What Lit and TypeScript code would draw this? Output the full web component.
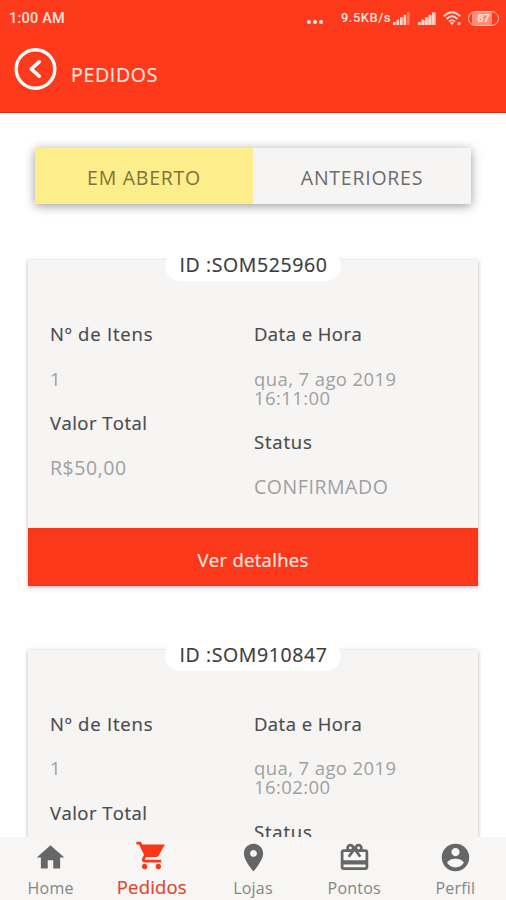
import { LitElement, html, css, svg } from "lit";
import { customElement, property } from "lit/decorators.js";
import { classMap } from "lit/directives/class-map.js";

interface Order {
  id: string;
  items: string;
  total: string;
  date: string;
  time: string;
  status: string;
}

const orders: Order[] = [
  { id: "SOM525960", items: "1", total: "R$50,00", date: "qua, 7 ago 2019", time: "16:11:00", status: "CONFIRMADO" },
  { id: "SOM910847", items: "1", total: "R$50,00", date: "qua, 7 ago 2019", time: "16:02:00", status: "CONFIRMADO" },
];

const navItems = [
  { label: "Home", path: "M10 20v-6h4v6h5v-8h3L12 3 2 12h3v8z" },
  {
    label: "Pedidos",
    active: true,
    path: "M7 18c-1.1 0-1.99.9-1.99 2S5.9 22 7 22s2-.9 2-2-.9-2-2-2zM1 2v2h2l3.6 7.59-1.35 2.45c-.16.28-.25.61-.25.96 0 1.1.9 2 2 2h12v-2H7.42c-.14 0-.25-.11-.25-.25l.03-.12.9-1.63h7.45c.75 0 1.41-.41 1.75-1.03L21.7 4H5.21l-.94-2H1zm16 16c-1.1 0-1.99.9-1.99 2s.89 2 1.99 2 2-.9 2-2-.9-2-2-2z",
  },
  {
    label: "Lojas",
    path: "M12 2C8.13 2 5 5.13 5 9c0 5.25 7 13 7 13s7-7.75 7-13c0-3.87-3.13-7-7-7zm0 9.5c-1.38 0-2.5-1.12-2.5-2.5s1.12-2.5 2.5-2.5 2.5 1.12 2.5 2.5-1.12 2.5-2.5 2.5z",
  },
  {
    label: "Pontos",
    path: "M20 6h-2.18c.11-.31.18-.65.18-1 0-1.66-1.34-3-3-3-1.05 0-1.96.54-2.5 1.35l-.5.67-.5-.68C10.96 2.54 10.05 2 9 2 7.34 2 6 3.34 6 5c0 .35.07.69.18 1H4c-1.11 0-1.99.89-1.99 2L2 19c0 1.11.89 2 2 2h16c1.11 0 2-.89 2-2V8c0-1.11-.89-2-2-2zm-5-2c.55 0 1 .45 1 1s-.45 1-1 1-1-.45-1-1 .45-1 1-1zM9 4c.55 0 1 .45 1 1s-.45 1-1 1-1-.45-1-1 .45-1 1-1zm11 15H4v-2h16v2zm0-5H4V8h5.08L7 10.83 8.62 12 11 8.76l1-1.36 1 1.36L15.38 12 17 10.83 14.92 8H20v6z",
  },
  {
    label: "Perfil",
    path: "M12 2C6.48 2 2 6.48 2 12s4.48 10 10 10 10-4.48 10-10S17.52 2 12 2zm0 3c1.66 0 3 1.34 3 3s-1.34 3-3 3-3-1.34-3-3 1.34-3 3-3zm0 14.2c-2.5 0-4.71-1.28-6-3.22.03-1.99 4-3.08 6-3.08 1.99 0 5.97 1.09 6 3.08-1.29 1.94-3.5 3.22-6 3.22z",
  },
];

@customElement("status-bar")
class StatusBar extends LitElement {
  static styles = css`
    :host {
      display: flex;
      align-items: center;
      height: 36px;
      padding: 0 7px 0 9px;
      color: #ffe3dc;
      font: 500 14.5px/18px Roboto, sans-serif;
    }
    .clock { flex: 1; letter-spacing: 0.2px; padding-top: 1px; }
    .dots { display: flex; gap: 2px; margin: 7px 18px 0 0; }
    .dot { width: 4px; height: 4px; border-radius: 50%; background: #ffe9e3; }
    .speed { font-size: 13px; letter-spacing: 0.5px; margin-right: 2px; }
    .signal { margin-right: 7px; }
    .wifi { margin-right: 6px; }
    .battery {
      box-sizing: border-box;
      width: 31px;
      height: 15px;
      border: 1.5px solid #ffc9bd;
      border-radius: 8px;
      background: linear-gradient(90deg, transparent 3px, #ff8d77 3px 23px, transparent 23px);
      font: 700 11px/13px Roboto, sans-serif;
      text-align: center;
    }
  `;
  render() {
    const bars = (full: number) => svg`${[0, 1, 2, 3, 4].map(
      (i) => svg`<rect x=${i * 3.5} y=${10 - i * 2.4} width="2.7" height=${3 + i * 2.4} fill="#ffd5ca" opacity=${i < full ? 1 : 0.4}></rect>`,
    )}`;
    return html`
      <span class="clock">1:00 AM</span>
      <span class="dots"><i class="dot"></i><i class="dot"></i><i class="dot"></i></span>
      <span class="speed">9.5KB/s</span>
      <svg class="signal" width="18" height="13" viewBox="0 0 18 13">${bars(4)}</svg>
      <svg class="signal" width="18" height="13" viewBox="0 0 18 13">${bars(5)}<path d="M3 11 18 0v13H3z" fill="#ffd5ca" opacity=".6"></path></svg>
      <svg class="wifi" width="19" height="15" viewBox="0 0 19 15">
        <g fill="none" stroke="#ffd5ca" stroke-width="1.9">
          <path d="M.8 5.2Q9 -2.8 17.2 5.2"></path>
          <path d="M3.6 8Q9 2.6 14.4 8"></path>
          <path d="M6 10.6Q9 7.6 12 10.6"></path>
        </g>
        <path d="M7 11.6Q9 10.4 11 11.6L9 14z" fill="#ffd5ca"></path>
        <circle cx="16" cy="12.5" r="1.7" fill="#ffa794"></circle>
      </svg>
      <span class="battery">87</span>
    `;
  }
}

@customElement("order-card")
class OrderCard extends LitElement {
  @property({ attribute: false }) order!: Order;
  static styles = css`
    :host {
      display: block;
      position: relative;
      box-sizing: border-box;
      height: 326px;
      flex: none;
      background: #f6f5f4;
      box-shadow: 0 1px 4px rgba(0, 0, 0, 0.3);
      color: #4a4a4a;
    }
    .cap { position: absolute; top: -9px; left: 0; right: 0; display: flex; justify-content: center; }
    .id {
      box-sizing: border-box;
      width: 176px;
      height: 30px;
      padding-left: 1px;
      border-radius: 15px;
      background: #fff;
      color: #3b3b3d;
      font-size: 19.5px;
      line-height: 27px;
      letter-spacing: 0.6px;
      -webkit-text-stroke: 0.2px currentColor;
      text-align: center;
      white-space: nowrap;
    }
    .body { box-sizing: border-box; height: 268px; padding: 64px 22px 0; display: grid; grid-template-columns: 204px 1fr; }
    .column { display: flex; flex-direction: column; gap: 25.5px; line-height: 19px; font-size: 18.5px; }
    .label { letter-spacing: 0.45px; -webkit-text-stroke: 0.2px currentColor; white-space: nowrap; }
    .count { letter-spacing: 0.8px; }
    .value { color: #a0a0a0; letter-spacing: 0.4px; }
    .wide { font-size: 19.5px; letter-spacing: 0.55px; }
    .details {
      display: block;
      width: 100%;
      height: 58px;
      padding: 4px 0 0;
      border: 0;
      background: #fc381b;
      color: #ffe9e3;
      font: 18.5px "Open Sans", sans-serif;
      -webkit-text-stroke: 0.2px currentColor;
      letter-spacing: 0.3px;
      box-shadow: inset 0 0 1px #c01800;
    }
  `;
  render() {
    const o = this.order;
    return html`
      <div class="cap"><span class="id">ID :${o.id}</span></div>
      <div class="body">
        <div class="column">
          <div class="label count">Nº de Itens</div>
          <div class="value">${o.items}</div>
          <div class="label">Valor Total</div>
          <div class="value wide">${o.total}</div>
        </div>
        <div class="column">
          <div class="label">Data e Hora</div>
          <div class="value">${o.date}<br />${o.time}</div>
          <div class="label count">Status</div>
          <div class="value wide">${o.status}</div>
        </div>
      </div>
      <button class="details">Ver detalhes</button>
    `;
  }
}

@customElement("app-root")
class AppRoot extends LitElement {
  static styles = css`
    :host {
      display: flex;
      flex-direction: column;
      height: 900px;
      overflow: hidden;
      background: #fff;
      font-family: "Open Sans", sans-serif;
    }
    .header { box-sizing: border-box; height: 113px; flex: none; background: #fd3b1c; border-bottom: 1px solid #e32a14; }
    .title-row { display: flex; align-items: center; gap: 14px; padding: 11px 0 0 14px; }
    .title { color: #ffe6df; font-size: 19.5px; line-height: 24px; letter-spacing: 0.7px; padding-top: 13px; -webkit-text-stroke: 0.2px currentColor; }
    .content { flex: 1; min-height: 0; overflow: hidden; padding: 35px 28px 0; display: flex; flex-direction: column; }
    .tabs { display: flex; flex: none; height: 56px; margin: 0 7px 56px; background: #f6f5f4; box-shadow: 0 2px 10px rgba(0, 0, 0, 0.4); }
    .tab { flex: 1; text-align: center; line-height: 60px; font-size: 19.5px; letter-spacing: 0.75px; color: #6c6c6c; }
    .selected { background: #feee8b; color: #7f713a; }
    .orders { display: flex; flex-direction: column; gap: 63.5px; }
    .nav { position: relative; display: flex; flex: none; height: 63px; background: #f7f6f5; color: #666; }
    .item { flex: 1; display: flex; flex-direction: column; align-items: center; padding-top: 4px; }
    .text { font-size: 16px; line-height: 20px; margin-top: 4px; color: #858585; letter-spacing: 0.2px; }
    .active { color: #f8371b; padding-top: 2px; }
    .active .text { color: #e2452f; font-size: 18.5px; line-height: 22px; -webkit-text-stroke: 0.2px currentColor; }
  `;
  render() {
    return html`
      <header class="header">
        <status-bar></status-bar>
        <div class="title-row">
          <svg width="43" height="43" viewBox="0 0 43 43" fill="none" stroke="#fff" stroke-linecap="round" stroke-linejoin="round">
            <circle cx="21.5" cy="22" r="19.3" stroke-width="3.4"></circle>
            <path d="M25.2 14.8 17.2 22l8 7.2" stroke-width="3.6"></path>
          </svg>
          <div class="title">PEDIDOS</div>
        </div>
      </header>
      <main class="content">
        <div class="tabs">
          <div class="tab selected">EM ABERTO</div>
          <div class="tab">ANTERIORES</div>
        </div>
        <div class="orders">${orders.map((o) => html`<order-card .order=${o}></order-card>`)}</div>
      </main>
      <nav class="nav">
        ${navItems.map(
          (n) => html`<div class=${classMap({ item: true, active: !!n.active })}>
            <svg width="33" height="33" viewBox="0 0 24 24" fill="currentColor"><path d=${n.path}></path></svg>
            <span class="text">${n.label}</span>
          </div>`,
        )}
      </nav>
    `;
  }
}
